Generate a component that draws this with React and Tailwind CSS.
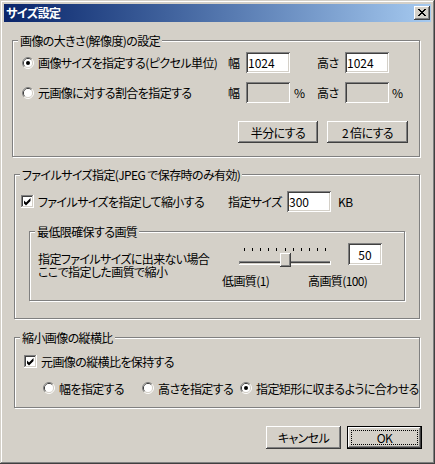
import React from "react";

const raised =
  "shadow-[inset_-1px_-1px_0_#404040,inset_1px_1px_0_#ffffff,inset_-2px_-2px_0_#808080,inset_2px_2px_0_#d4d0c8]";
const sunken =
  "shadow-[inset_1px_1px_0_#808080,inset_-1px_-1px_0_#ffffff,inset_2px_2px_0_#404040,inset_-2px_-2px_0_#d4d0c8]";

function Radio({ checked }) {
  return (
    <svg width="12" height="12" viewBox="0 0 12 12" className="block shrink-0">
      <path d="M2.11 9.89 A5.5 5.5 0 0 1 9.89 2.11" fill="none" stroke="#808080" />
      <path d="M9.89 2.11 A5.5 5.5 0 0 1 2.11 9.89" fill="none" stroke="#ffffff" />
      <path d="M2.82 9.18 A4.5 4.5 0 0 1 9.18 2.82" fill="none" stroke="#404040" />
      <path d="M9.18 2.82 A4.5 4.5 0 0 1 2.82 9.18" fill="none" stroke="#d4d0c8" />
      <circle cx="6" cy="6" r="4" fill="#ffffff" />
      {checked && <circle cx="6" cy="6" r="2" fill="#000000" />}
    </svg>
  );
}

function Check({ checked }) {
  return (
    <svg width="13" height="13" viewBox="0 0 13 13" className="block shrink-0">
      <rect x="0" y="0" width="13" height="13" fill="#ffffff" />
      <rect x="0" y="0" width="12" height="12" fill="#808080" />
      <rect x="1" y="1" width="11" height="11" fill="#d4d0c8" />
      <rect x="1" y="1" width="10" height="10" fill="#404040" />
      <rect x="2" y="2" width="9" height="9" fill="#ffffff" />
      {checked && <polygon points="3,5.5 5,7.5 9.5,3 9.5,6 5,10.5 3,8.5" fill="#000000" />}
    </svg>
  );
}

function Field({ value, className, disabled, center }) {
  return (
    <div
      className={`${className} ${sunken} ${disabled ? "bg-[#d4d0c8]" : "bg-white"} ${
        center ? "justify-center" : "pl-[2px]"
      } flex items-center shrink-0 leading-[15px] tracking-normal`}
    >
      {value}
    </div>
  );
}

function Button({ children, className, isDefault }) {
  if (isDefault) {
    return (
      <div className={`${className} border border-black flex shrink-0`}>
        <div className={`flex-1 ${raised} bg-[#d4d0c8] p-[3px] flex`}>
          <div className="flex-1 border border-dotted border-black flex items-center justify-center leading-[15px]">
            {children}
          </div>
        </div>
      </div>
    );
  }
  return (
    <div className={`${className} ${raised} bg-[#d4d0c8] flex items-center justify-center shrink-0 leading-[15px]`}>
      {children}
    </div>
  );
}

function Group({ title, className, children }) {
  return (
    <div className={`${className} border border-[#808080] shadow-[1px_1px_0_#ffffff,inset_1px_1px_0_#ffffff] shrink-0`}>
      <div className="-mt-[8px] ml-[5px] w-fit px-[2px] bg-[#d4d0c8] leading-[15px] whitespace-nowrap">{title}</div>
      {children}
    </div>
  );
}

function Slider() {
  const ticks = [];
  for (let i = 0; i <= 10; i++) {
    ticks.push(<rect key={i} x={5 + Math.round(8.1 * i)} y="2" width="1" height="3" fill="#000000" />);
  }
  return (
    <svg width="92" height="24" viewBox="0 0 92 24" className="block shrink-0">
      {ticks}
      <rect x="0" y="15" width="92" height="1" fill="#808080" />
      <rect x="1" y="16" width="90" height="1" fill="#404040" />
      <rect x="1" y="17" width="90" height="1" fill="#d4d0c8" />
      <rect x="0" y="18" width="92" height="1" fill="#ffffff" />
      <rect x="91" y="15" width="1" height="4" fill="#ffffff" />
      <rect x="0" y="15" width="1" height="3" fill="#808080" />
      <rect x="41" y="7" width="11" height="14" fill="#404040" />
      <rect x="41" y="7" width="10" height="13" fill="#ffffff" />
      <rect x="42" y="8" width="9" height="12" fill="#808080" />
      <rect x="42" y="8" width="8" height="11" fill="#d4d0c8" />
    </svg>
  );
}

function CloseButton() {
  return (
    <div className={`w-[16px] h-[14px] bg-[#d4d0c8] ${raised} pl-[4px] pt-[3px] shrink-0`}>
      <svg width="8" height="7" viewBox="0 0 8 7" className="block">
        <path
          d="M0 0h2v1h-2z M6 0h2v1h-2z M1 1h2v1h-2z M5 1h2v1h-2z M2 2h4v1h-4z M3 3h2v1h-2z M2 4h4v1h-4z M1 5h2v1h-2z M5 5h2v1h-2z M0 6h2v1h-2z M6 6h2v1h-2z"
          fill="#000000"
        />
      </svg>
    </div>
  );
}

export default function App() {
  return (
    <div
      className={`w-[435px] h-[464px] bg-[#d4d0c8] p-[4px] flex flex-col text-[12px] tracking-[-0.6px] text-black font-['Noto_Sans_CJK_JP',sans-serif] [font-feature-settings:'palt'] shadow-[inset_-1px_-1px_0_#404040,inset_1px_1px_0_#d4d0c8,inset_-2px_-2px_0_#808080,inset_2px_2px_0_#ffffff]`}
    >
      {/* Title bar */}
      <div className="h-[18px] shrink-0 bg-linear-to-r from-[#0a246a] to-[#a6caf0] flex items-center justify-between pl-[2px] pr-[1px]">
        <span className="text-white font-bold leading-[18px]">サイズ設定</span>
        <CloseButton />
      </div>

      {/* Group 1 */}
      <Group title="画像の大きさ(解像度)の設定" className="mt-[18px] ml-[8px] w-[408px] h-[117px]">
        <div className="mt-[4px] h-[21px] flex items-center pl-[9px] leading-[15px]">
          <Radio checked />
          <span className="ml-[4px] w-[190px] shrink-0 whitespace-nowrap">画像サイズを指定する(ピクセル単位)</span>
          <span className="w-[18px] shrink-0">幅</span>
          <Field value="1024" className="w-[44px] h-[21px]" />
          <span className="w-[27px] shrink-0" />
          <span className="w-[28px] shrink-0">高さ</span>
          <Field value="1024" className="w-[44px] h-[21px]" />
        </div>
        <div className="mt-[9px] h-[21px] flex items-center pl-[9px] leading-[15px]">
          <Radio />
          <span className="ml-[4px] w-[190px] shrink-0 whitespace-nowrap">元画像に対する割合を指定する</span>
          <span className="w-[18px] shrink-0">幅</span>
          <Field value="" className="w-[44px] h-[21px]" disabled />
          <span className="w-[27px] shrink-0 pl-[4px]">%</span>
          <span className="w-[28px] shrink-0">高さ</span>
          <Field value="" className="w-[44px] h-[21px]" disabled />
          <span className="pl-[3px]">%</span>
        </div>
        <div className="mt-[18px] flex pl-[225px] gap-[9px]">
          <Button className="w-[80px] h-[22px]">半分にする</Button>
          <Button className="w-[81px] h-[22px]">2 倍にする</Button>
        </div>
      </Group>

      {/* Group 2 */}
      <Group title="ファイルサイズ指定(JPEG で保存時のみ有効)" className="mt-[17px] ml-[10px] w-[406px] h-[145px]">
        <div className="mt-[9px] h-[21px] flex items-center pl-[6px] leading-[15px]">
          <Check checked />
          <span className="ml-[4px] w-[190px] shrink-0 whitespace-nowrap">ファイルサイズを指定して縮小する</span>
          <span className="w-[59px] shrink-0 whitespace-nowrap">指定サイズ</span>
          <Field value="300" className="w-[44px] h-[21px]" />
          <span className="ml-[7px]">KB</span>
        </div>
        <Group title="最低限確保する画質" className="mt-[19px] ml-[14px] w-[376px] h-[70px]">
          <div className="mt-[4px] flex items-start">
            <div className="pl-[8px] pt-[9px] w-[192px] shrink-0 leading-[13px] whitespace-nowrap">
              <div>指定ファイルサイズに出来ない場合</div>
              <div>ここで指定した画質で縮小</div>
            </div>
            <div className="flex flex-col">
              <div className="flex items-start pl-[17px]">
                <div className="mt-[3px]">
                  <Slider />
                </div>
                <Field value="50" className="ml-[17px] w-[34px] h-[22px]" center />
              </div>
              <div className="mt-[4px] flex leading-[13px] whitespace-nowrap">
                <span className="w-[86px] shrink-0">低画質(1)</span>
                <span>高画質(100)</span>
              </div>
            </div>
          </div>
        </Group>
      </Group>

      {/* Group 3 */}
      <Group title="縮小画像の縦横比" className="mt-[18px] ml-[10px] w-[406px] h-[71px]">
        <div className="mt-[10px] h-[13px] flex items-center pl-[9px] leading-[15px]">
          <Check checked />
          <span className="ml-[4px] whitespace-nowrap">元画像の縦横比を保持する</span>
        </div>
        <div className="mt-[13px] h-[14px] flex items-center pl-[28px] leading-[15px] whitespace-nowrap">
          <div className="w-[99px] shrink-0 flex items-center">
            <Radio />
            <span className="ml-[4px]">幅を指定する</span>
          </div>
          <div className="w-[98px] shrink-0 flex items-center">
            <Radio />
            <span className="ml-[4px]">高さを指定する</span>
          </div>
          <div className="flex items-center">
            <Radio checked />
            <span className="ml-[4px]">指定矩形に収まるように合わせる</span>
          </div>
        </div>
      </Group>

      {/* Bottom buttons */}
      <div className="mt-[18px] flex justify-end pr-[9px] gap-[6px]">
        <Button className="w-[75px] h-[23px]">キャンセル</Button>
        <Button className="w-[75px] h-[23px]" isDefault>
          OK
        </Button>
      </div>
    </div>
  );
}
